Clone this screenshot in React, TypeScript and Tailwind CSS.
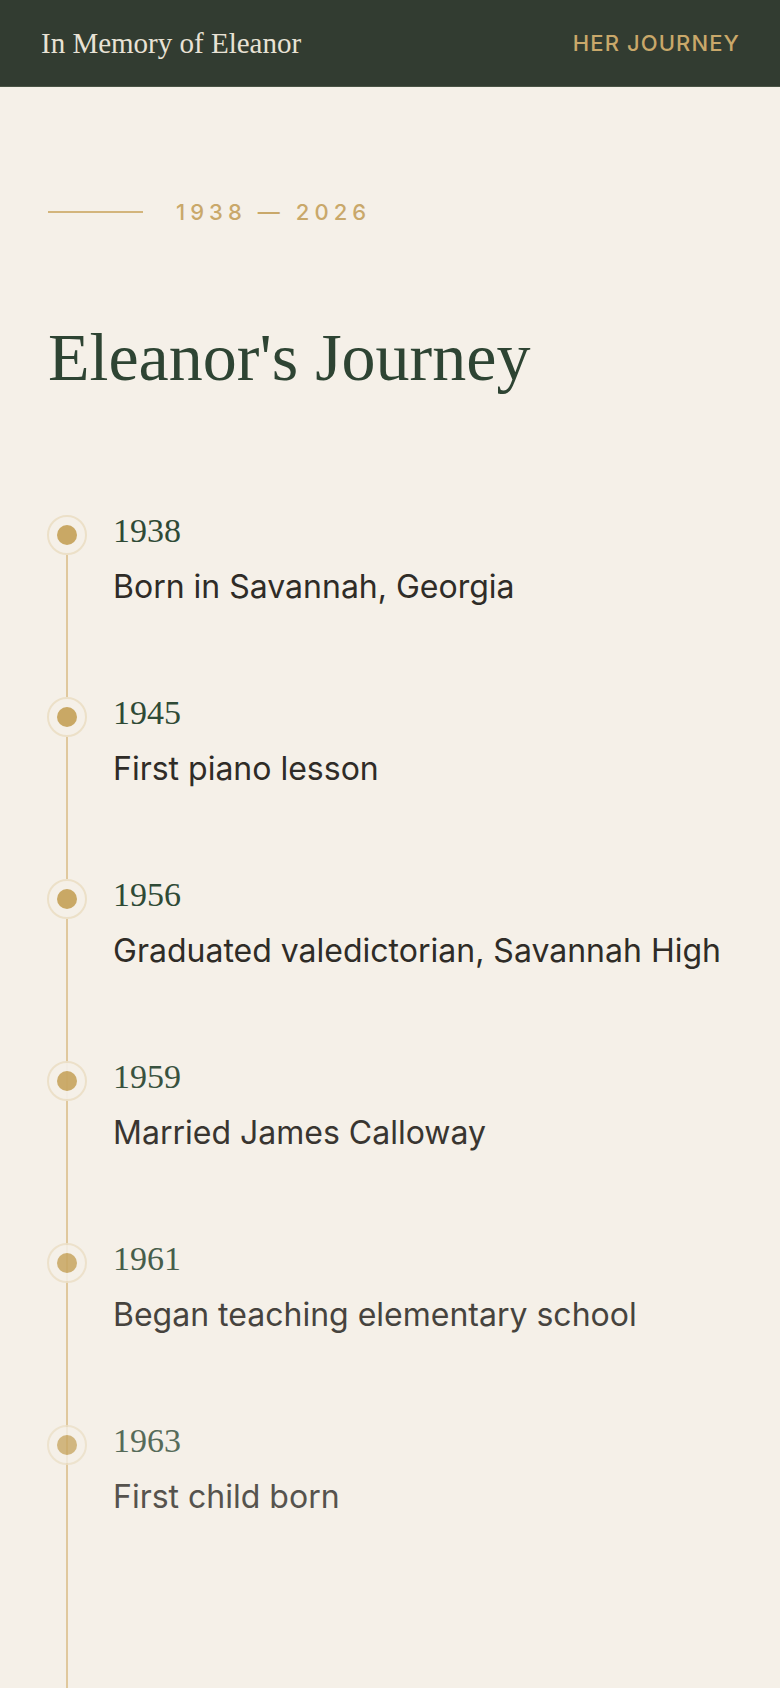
const milestones = [
  { year: '1938', text: 'Born in Savannah, Georgia', fade: 'opacity-100' },
  { year: '1945', text: 'First piano lesson', fade: 'opacity-100' },
  { year: '1956', text: 'Graduated valedictorian, Savannah High', fade: 'opacity-100' },
  { year: '1959', text: 'Married James Calloway', fade: 'opacity-95' },
  { year: '1961', text: 'Began teaching elementary school', fade: 'opacity-[0.88]' },
  { year: '1963', text: 'First child born', fade: 'opacity-80' },
]

const serif = "font-['Liberation_Serif','Times_New_Roman',serif]"
const sans = "font-['Inter','Liberation_Sans',sans-serif]"

export default function App() {
  return (
    <div className="min-h-screen bg-[#f5f0e8]">
      <header className="flex h-[87px] items-center justify-between border-b border-[#4a5445] bg-[#323c31] pl-[41px] pr-[40px]">
        <span className={`${serif} text-[29px] leading-none text-[#e8e2d5]`}>In Memory of Eleanor</span>
        <span className={`${sans} text-[22px] font-medium leading-none tracking-[0.05em] text-[#c9a86a]`}>HER JOURNEY</span>
      </header>

      <main className="px-12 pt-[111px]">
        <div className="flex h-[28px] items-center gap-[33px]">
          <span className="h-[2px] w-[95px] bg-[#d3b57c]" />
          <span className={`${sans} text-[22px] font-medium leading-none tracking-[0.23em] text-[#c9a86a]`}>1938 — 2026</span>
        </div>

        <h1 className={`${serif} mt-[97px] text-[68px] leading-none text-[#2e4433]`}>Eleanor's Journey</h1>

        <ol className="relative mt-[124px] pb-[200px]">
          <span className="absolute bottom-0 left-[18px] top-[20px] w-[2px] bg-[#e0c89d]" />
          {milestones.map((m) => (
            <li key={m.year} className={`relative pb-[91px] pl-[65px] pt-px ${m.fade}`}>
              <span className="absolute left-[-1px] top-0 flex h-10 w-10 items-center justify-center rounded-full border-2 border-[#ece0c8] bg-[#f5f0e8]">
                <span className="h-5 w-5 rounded-full bg-[#c9a865]" />
              </span>
              <div className={`${serif} text-[34px] leading-[30px] text-[#2f4a36]`}>{m.year}</div>
              <p className={`${sans} mt-[22px] text-[32px] leading-[38px] text-[#2f2c27]`}>{m.text}</p>
            </li>
          ))}
        </ol>
      </main>
    </div>
  )
}
